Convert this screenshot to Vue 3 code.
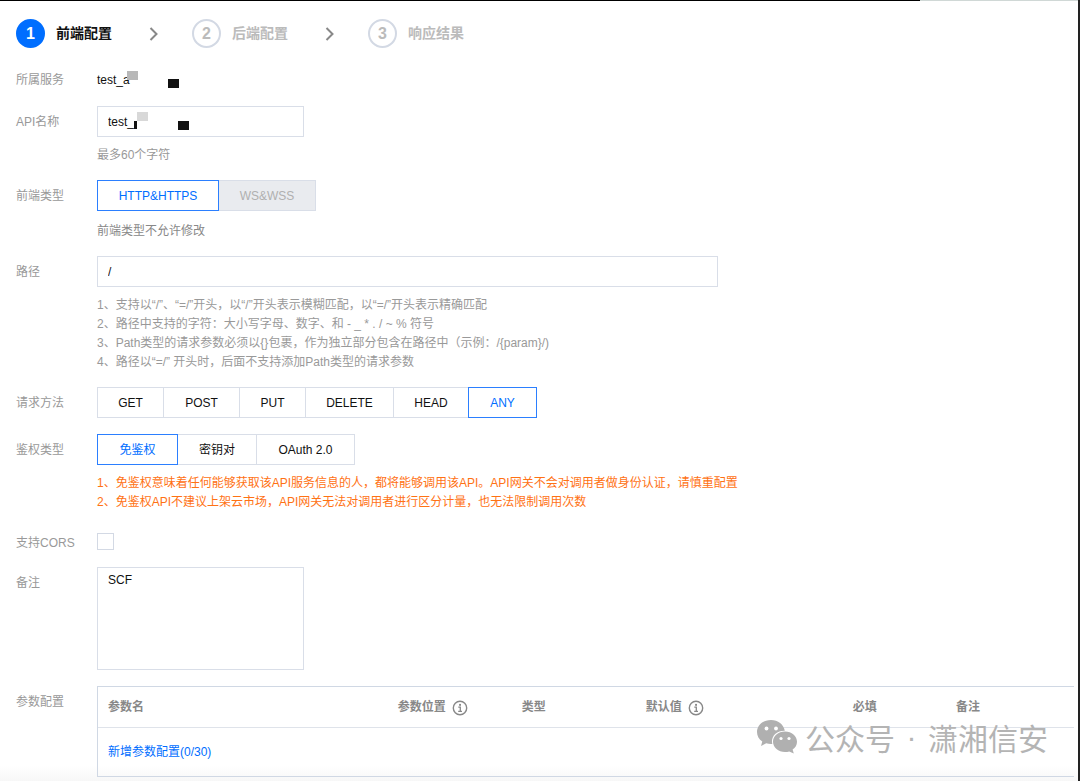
<script setup>
import { ref } from 'vue'

const steps = ['前端配置', '后端配置', '响应结果']
const current = ref(0)

const apiName = ref('test_')
const path = ref('/')
const remark = ref('SCF')
const cors = ref(false)

const methods = ['GET', 'POST', 'PUT', 'DELETE', 'HEAD', 'ANY']
const method = ref('ANY')
const auths = ['免鉴权', '密钥对', 'OAuth 2.0']
const auth = ref('免鉴权')

const pathHints = [
  '1、支持以“/”、“=/”开头，以“/”开头表示模糊匹配，以“=/”开头表示精确匹配',
  '2、路径中支持的字符：大小写字母、数字、和 - _ * . / ~ % 符号',
  '3、Path类型的请求参数必须以{}包裹，作为独立部分包含在路径中（示例：/{param}/)',
  '4、路径以“=/” 开头时，后面不支持添加Path类型的请求参数',
]
const authHints = [
  '1、免鉴权意味着任何能够获取该API服务信息的人，都将能够调用该API。API网关不会对调用者做身份认证，请慎重配置',
  '2、免鉴权API不建议上架云市场，API网关无法对调用者进行区分计量，也无法限制调用次数',
]
const columns = [
  { key: 'name', label: '参数名' },
  { key: 'place', label: '参数位置', info: true },
  { key: 'type', label: '类型' },
  { key: 'default', label: '默认值', info: true },
  { key: 'required', label: '必填' },
  { key: 'note', label: '备注' },
]
</script>

<template>
  <main class="page">
    <div class="topline"></div>
    <ol class="steps">
      <li v-for="(s, i) in steps" :key="s" class="step" :class="{ active: i === current }">
        <span class="num">{{ i + 1 }}</span>
        <span class="step-name">{{ s }}</span>
        <svg v-if="i < 2" class="chevron" viewBox="0 0 10 16" aria-hidden="true">
          <path d="M1.500 2 L7.500 8 L1.500 14" fill="none" stroke="#888" stroke-width="2" />
        </svg>
      </li>
    </ol>

    <form class="form" @submit.prevent>
      <div class="row plain">
        <span class="label">所属服务</span>
        <div class="value service">
          <span>test_a</span>
          <i class="mask grey"></i><i class="mask black"></i>
        </div>
      </div>

      <div class="row">
        <label class="label" for="api-name">API名称</label>
        <div class="value">
          <div class="name-box">
            <input id="api-name" v-model="apiName" class="field" type="text" />
            <i class="mask grey"></i><i class="mask sliver"></i><i class="mask black"></i>
          </div>
          <p class="hint">最多60个字符</p>
        </div>
      </div>

      <div class="row">
        <span id="type-label" class="label">前端类型</span>
        <div class="value">
          <div class="group types" role="group" aria-labelledby="type-label">
            <button type="button" class="seg on" aria-pressed="true">HTTP&amp;HTTPS</button>
            <button type="button" class="seg" disabled>WS&amp;WSS</button>
          </div>
          <p class="hint dark">前端类型不允许修改</p>
        </div>
      </div>

      <div class="row">
        <label class="label" for="path">路径</label>
        <div class="value">
          <input id="path" v-model="path" class="field wide" type="text" />
          <div class="hint"><p v-for="h in pathHints" :key="h">{{ h }}</p></div>
        </div>
      </div>

      <div class="row">
        <span id="method-label" class="label">请求方法</span>
        <div class="value">
          <div class="group methods" role="group" aria-labelledby="method-label">
            <button v-for="m in methods" :key="m" type="button" class="seg" :class="{ on: m === method }"
              :aria-pressed="m === method" @click="method = m">{{ m }}</button>
          </div>
        </div>
      </div>

      <div class="row">
        <span id="auth-label" class="label">鉴权类型</span>
        <div class="value">
          <div class="group auths" role="group" aria-labelledby="auth-label">
            <button v-for="a in auths" :key="a" type="button" class="seg" :class="{ on: a === auth }"
              :aria-pressed="a === auth" @click="auth = a">{{ a }}</button>
          </div>
          <div class="hint warn"><p v-for="h in authHints" :key="h">{{ h }}</p></div>
        </div>
      </div>

      <div class="row check-row">
        <label class="label" for="cors">支持CORS</label>
        <div class="value"><input id="cors" v-model="cors" class="check" type="checkbox" /></div>
      </div>

      <div class="row">
        <label class="label" for="remark">备注</label>
        <div class="value"><textarea id="remark" v-model="remark" class="field area"></textarea></div>
      </div>

      <div class="row">
        <span id="param-label" class="label">参数配置</span>
        <div class="value">
          <table class="params" aria-labelledby="param-label">
            <colgroup>
              <col v-for="c in columns" :key="c.key" :class="'c-' + c.key" />
            </colgroup>
            <thead>
              <tr>
                <th v-for="c in columns" :key="c.key" scope="col">
                  <span class="th">{{ c.label }}
                    <svg v-if="c.info" class="info" viewBox="0 0 16 16" aria-hidden="true">
                      <circle cx="8" cy="8" r="6.700" fill="none" stroke="#888" stroke-width="1.400" />
                      <path d="M6.300 7.200H8.300V11.300M6.200 11.300H10" fill="none" stroke="#888" stroke-width="1.300" />
                      <rect x="7.100" y="3.900" width="1.900" height="1.900" fill="#888" />
                    </svg>
                  </span>
                </th>
              </tr>
            </thead>
            <tbody>
              <tr><td colspan="6"><a href="#">新增参数配置(0/30)</a></td></tr>
            </tbody>
          </table>
        </div>
      </div>
    </form>

    <div class="watermark">
      <svg class="wechat" viewBox="0 0 42 36" aria-hidden="true">
        <path fill="#b0b0b0" d="M15 1C7 1 1 6.300 1 13c0 4 2 7.300 5.300 9.500L5 27l5.200-2.700c1.500.4 3.100.7 4.800.7h1.300C14.500 17.500 20.500 11.500 28.800 11.700 27.700 5.500 22 1 15 1z" />
        <path fill="#b0b0b0" d="M29 12.500c-6.700 0-12 4.600-12 10.200S22.300 33 29 33c1.500 0 2.900-.2 4.200-.6L37.800 34.500l-1.200-3.900C39.400 28.700 41 25.900 41 22.700 41 17.100 35.700 12.500 29 12.500z" />
        <g fill="#fff">
          <circle cx="10.500" cy="9.500" r="1.900" /><circle cx="20" cy="9.500" r="1.900" />
          <circle cx="25" cy="19.500" r="1.600" /><circle cx="33" cy="19.500" r="1.600" />
        </g>
      </svg>
      <span>公众号</span><span class="dot">·</span><span>潇湘信安</span>
    </div>
  </main>
</template>

<style>
body { margin: 0; }
</style>

<style scoped>
.page {
  position: relative;
  box-sizing: border-box;
  min-height: 100vh;
  overflow: hidden;
  border-right: 2px solid #222;
  background: linear-gradient(to top, #f7f7f7, #fff 16px);
  color: #111;
  font: 12px/19px "Liberation Sans", "Noto Sans CJK SC", sans-serif;
}
.topline { height: 1px; background: linear-gradient(to right, #000 920px, #d0d8d6 920px); }
p { margin: 0; }

.steps { display: flex; margin: 0; padding: 17px 16px 15px; list-style: none; }
.step { display: flex; align-items: center; height: 31px; color: #bbb; font-size: 14px; font-weight: 700; }
.num {
  box-sizing: border-box;
  width: 29px;
  height: 29px;
  margin-right: 11px;
  border: 2px solid #d3d9e4;
  border-radius: 50%;
  font-size: 16px;
  line-height: 25px;
  text-align: center;
}
.active { color: #111; }
.active .num { border-color: #006eff; background: #006eff; color: #fff; }
.chevron { width: 10px; height: 16px; margin: 0 33px 0 37px; }

.form { display: flex; flex-direction: column; gap: 16px; padding: 0 4px 4px 16px; }
.row { display: grid; grid-template-columns: 81px minmax(0, 1fr); align-items: start; }
.label { padding-top: 7px; color: #999; }
.plain { height: 26px; }
.service { position: relative; padding-top: 7px; }
.mask { position: absolute; width: 11px; height: 9px; }
.mask.grey { background: #b8b8b8; }
.mask.black { background: #111; }
.service .grey { left: 30px; top: 7px; }
.service .black { left: 71px; top: 15px; }
.name-box { position: relative; width: 207px; }
.name-box .grey { left: 40px; top: 6px; background: #d8d8d8; }
.name-box .sliver { left: 37px; top: 15px; width: 3px; height: 8px; background: #111; }
.name-box .black { left: 81px; top: 15px; }

.field {
  display: block;
  box-sizing: border-box;
  width: 207px;
  height: 31px;
  padding: 0 10px;
  border: 1px solid #d9dee8;
  border-radius: 0;
  outline: 0;
  background: #fff;
  color: #111;
  font: inherit;
}
.wide { width: 100%; max-width: 621px; }
.area { height: 103px; padding: 3px 10px; resize: none; }

.hint { padding-top: 9px; margin-bottom: -1px; color: #999; white-space: nowrap; }
.hint.dark { padding-top: 11px; color: #888; }
.hint.warn { color: #ff7214; }

.group { display: grid; justify-content: start; }
.types { grid-template-columns: 121px 97px; }
.methods { grid-template-columns: 66px 76px 66px 88px 75px 68px; }
.auths { grid-template-columns: 80px 79px 98px; }
.seg {
  position: relative;
  height: 31px;
  margin: 0 -1px 0 0;
  padding: 2px 0 0;
  border: 1px solid #d9dee8;
  background: #fff;
  color: #111;
  font: inherit;
}
.seg.on { z-index: 1; border-color: #2b7fff; color: #006eff; }
.seg:disabled { background: #e9ebef; color: #b0b0b0; }

.check-row { height: 24px; }
.check {
  display: block;
  appearance: none;
  box-sizing: border-box;
  width: 17px;
  height: 17px;
  margin: 6px 0 0;
  border: 1px solid #d3d9e4;
  background: #fff;
}
.check:checked { background: #006eff; }

.params {
  width: 100%;
  table-layout: fixed;
  border-collapse: separate;
  border-spacing: 0;
  border: 1px solid #d0d8e4;
  border-right: 0;
}
.c-name { width: 29.700%; }
.c-place, .c-type { width: 12.700%; }
.c-default { width: 21.200%; }
.c-required { width: 10.600%; }
.params th { height: 41px; padding: 1px 10px 0; box-sizing: border-box; border-bottom: 1px solid #dfe3ea; color: #888; text-align: left; }
.th { display: flex; align-items: center; gap: 6px; }
.info { width: 16px; height: 16px; }
.params td { height: 48px; padding: 1px 10px 0; box-sizing: border-box; }
a { color: #006eff; text-decoration: none; }

.watermark {
  position: absolute;
  right: 30px;
  bottom: 24px;
  display: flex;
  align-items: center;
  color: #b4b4b4;
  font: 400 30px/40px "Noto Sans CJK SC", sans-serif;
}
.wechat { width: 42px; height: 36px; margin-right: 7px; }
.dot { width: 33px; font-family: "Liberation Sans", sans-serif; text-align: center; }
</style>
